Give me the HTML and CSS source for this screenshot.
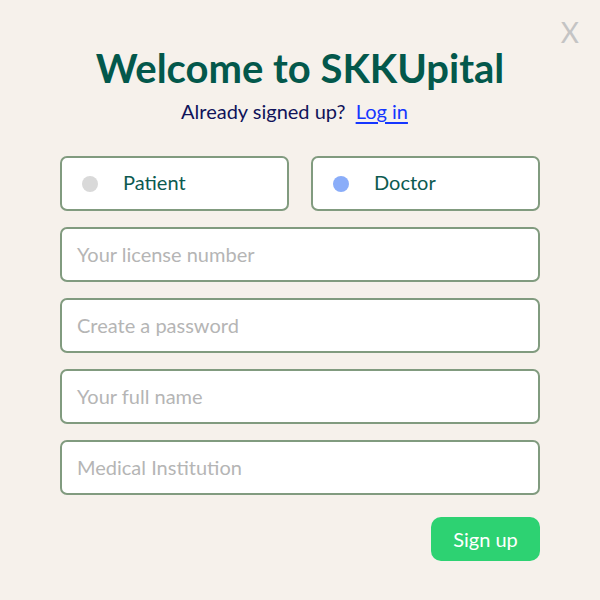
FILE: index.html
```html
<!DOCTYPE html>
<html>
<head>
<meta charset="utf-8">
<link rel="stylesheet" href="styles.css">
</head>
<body>
<div class="page">
  <button class="close">X</button>
  <div class="form">
    <h1 class="title">Welcome to SKKUpital</h1>
    <p class="sub">Already signed up?&nbsp; <a class="link" href="#">Log in</a></p>
    <div class="roles">
      <div class="role"><span class="dot dot-off"></span><span class="role-label">Patient</span></div>
      <div class="role"><span class="dot dot-on"></span><span class="role-label">Doctor</span></div>
    </div>
    <div class="field">Your license number</div>
    <div class="field">Create a password</div>
    <div class="field">Your full name</div>
    <div class="field">Medical Institution</div>
    <div class="actions"><button class="signup">Sign up</button></div>
  </div>
</div>
</body>
</html>
```
FILE: styles.css
```css
html, body { margin: 0; padding: 0; }
body {
  background: #f6f1eb;
  font-family: Lato, "Open Sans", sans-serif;
  width: 600px;
  height: 600px;
  overflow: hidden;
}
.page { position: relative; width: 600px; height: 600px; }
.close {
  position: absolute;
  top: 16px;
  right: 21px;
  background: none;
  border: none;
  padding: 0;
  font-family: Lato, sans-serif;
  font-size: 28px;
  color: #c4c4c4;
  line-height: 32px;
}
.form {
  width: 480px;
  margin: 0 auto;
  padding-top: 44px;
  display: flex;
  flex-direction: column;
}
.title {
  margin: 0;
  text-align: center;
  font-size: 40px;
  font-weight: 700;
  color: #03584b;
  line-height: 48px;
}
.sub {
  margin: 0;
  margin-top: 4px;
  padding-right: 11px;
  text-align: center;
  font-size: 20px;
  color: #10135a;
  line-height: 30px;
}
.link { color: #1536ff; text-decoration: underline; text-underline-offset: 3px; }
.roles {
  margin-top: 30px;
  display: flex;
  gap: 22px;
}
.role {
  flex: 1;
  height: 55px;
  box-sizing: border-box;
  background: #fff;
  border: 2px solid #819b7f;
  border-radius: 7px;
  display: flex;
  align-items: center;
  padding-left: 20px;
  padding-bottom: 3px;
}
.dot { width: 16px; height: 16px; border-radius: 50%; margin-top: 3px; }
.dot-off { background: #d9d9d9; }
.dot-on { background: #8aadf9; }
.role-label { margin-left: 25px; font-size: 20px; color: #0c5a50; }
.field {
  margin-top: 16px;
  height: 55px;
  box-sizing: border-box;
  background: #fff;
  border: 2px solid #819b7f;
  border-radius: 7px;
  display: flex;
  align-items: center;
  padding-left: 15px;
  padding-bottom: 2px;
  font-size: 20px;
  color: #b5b5b5;
}
.actions { display: flex; justify-content: flex-end; margin-top: 22px; }
.signup {
  width: 109px;
  height: 44px;
  border: none;
  border-radius: 10px;
  background: #2dd272;
  color: #fff;
  font-family: Lato, sans-serif;
  font-size: 20px;
  padding: 0;
}
```
